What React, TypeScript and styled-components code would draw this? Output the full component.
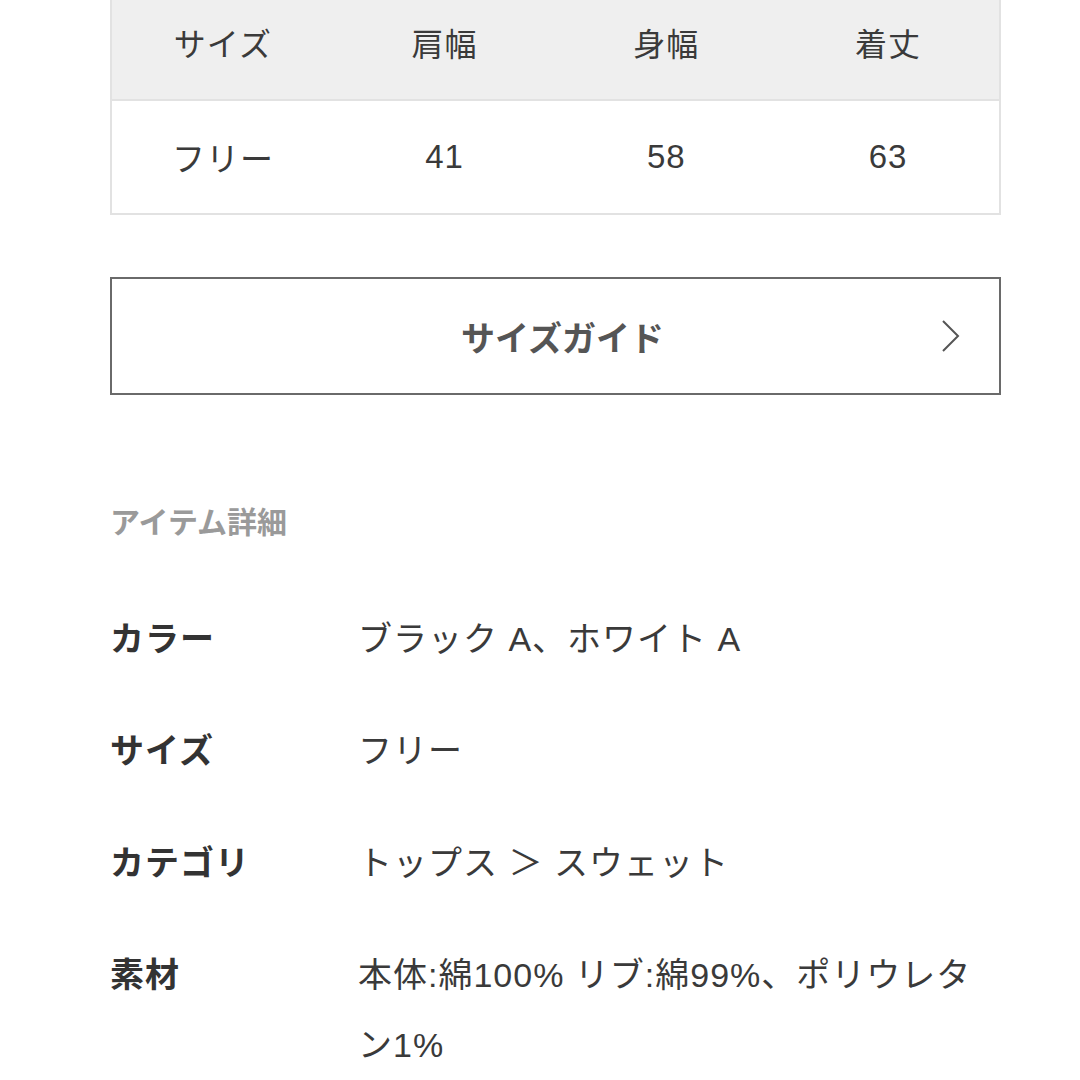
import React from "react";
import styled, { createGlobalStyle } from "styled-components";

const GlobalStyle = createGlobalStyle`
  html, body {
    margin: 0;
    padding: 0;
    background: #ffffff;
  }
  body {
    font-family: "Liberation Sans", "Noto Sans CJK JP", sans-serif;
    color: #333333;
    overflow: hidden;
  }
`;

const Page = styled.div`
  width: 1080px;
  height: 1080px;
  box-sizing: border-box;
  padding: 0 79px 0 110px;
  overflow: hidden;
`;

const SizeTable = styled.div`
  margin-top: -16px;
  border: 2px solid #e2e2e2;
  border-top: none;
`;

const TableRow = styled.div<{ $header?: boolean }>`
  display: grid;
  grid-template-columns: repeat(4, 1fr);
  align-items: center;
  height: ${(p) => (p.$header ? "115px" : "112px")};
  background: ${(p) => (p.$header ? "#efefef" : "#ffffff")};
  border-bottom: ${(p) => (p.$header ? "2px solid #e2e2e2" : "none")};
`;

const Cell = styled.div<{ $header?: boolean }>`
  text-align: center;
  font-size: ${(p) => (p.$header ? "32px" : "33px")};
  letter-spacing: 1px;
  color: #3a3a3a;
`;

const GuideButton = styled.button`
  margin-top: 62px;
  width: 100%;
  height: 118px;
  box-sizing: border-box;
  border: 2px solid #6a6a6a;
  background: #ffffff;
  display: flex;
  align-items: center;
  justify-content: center;
  position: relative;
  font-family: inherit;
  font-size: 34px;
  font-weight: 700;
  color: #555555;
  padding: 0 0 0 14px;
`;

const Chevron = styled.svg`
  position: absolute;
  right: 38px;
  top: 50%;
  transform: translateY(-50%);
`;

const SectionTitle = styled.h2`
  margin: 108px 0 0;
  font-size: 30px;
  line-height: 40px;
  font-weight: 700;
  color: #9a9a9a;
`;

const DetailList = styled.dl`
  margin: 61px 0 0;
  display: flex;
  flex-direction: column;
  gap: 42px;
`;

const DetailRow = styled.div`
  display: grid;
  grid-template-columns: 248px 1fr;
  font-size: 34px;
  line-height: 70px;
  letter-spacing: 1px;
`;

const Label = styled.dt`
  font-weight: 700;
  color: #333333;
`;

const Value = styled.dd`
  margin: 0;
  color: #3a3a3a;
`;

const columns = ["サイズ", "肩幅", "身幅", "着丈"];
const values = ["フリー", "41", "58", "63"];

const details: { label: string; value: React.ReactNode }[] = [
  { label: "カラー", value: "ブラック A、ホワイト A" },
  { label: "サイズ", value: "フリー" },
  { label: "カテゴリ", value: "トップス ＞ スウェット" },
  {
    label: "素材",
    value: (
      <>
        本体:綿100% リブ:綿99%、ポリウレタ
        <br />
        ン1%
      </>
    ),
  },
];

export default function App() {
  return (
    <Page>
      <GlobalStyle />
      <SizeTable>
        <TableRow $header>
          {columns.map((c) => (
            <Cell $header key={c}>
              {c}
            </Cell>
          ))}
        </TableRow>
        <TableRow>
          {values.map((v, i) => (
            <Cell key={i}>{v}</Cell>
          ))}
        </TableRow>
      </SizeTable>

      <GuideButton>
        サイズガイド
        <Chevron width="20" height="34" viewBox="0 0 20 34">
          <polyline
            points="2,2 17,17 2,32"
            fill="none"
            stroke="#555"
            strokeWidth="2"
          />
        </Chevron>
      </GuideButton>

      <SectionTitle>アイテム詳細</SectionTitle>

      <DetailList>
        {details.map((d) => (
          <DetailRow key={d.label}>
            <Label>{d.label}</Label>
            <Value>{d.value}</Value>
          </DetailRow>
        ))}
      </DetailList>
    </Page>
  );
}
